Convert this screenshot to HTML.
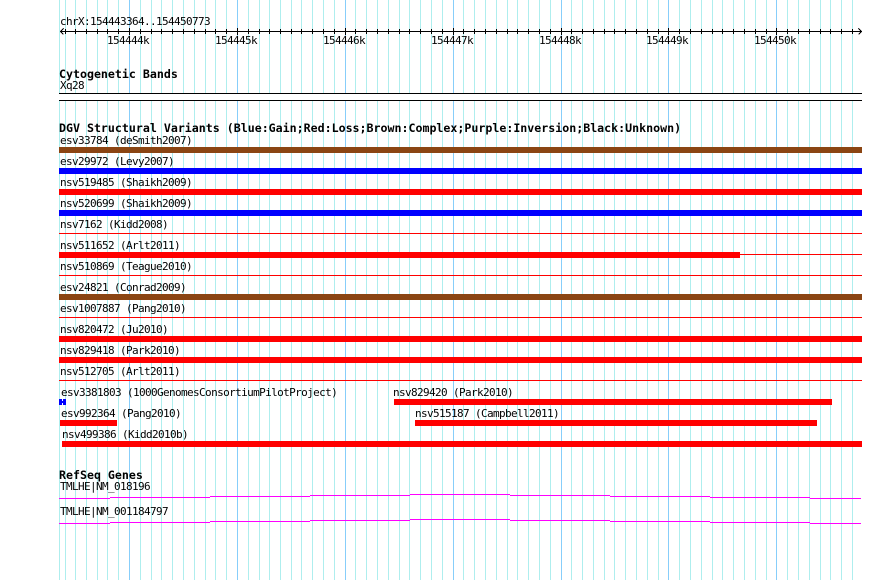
<!DOCTYPE html>
<html><head><meta charset="utf-8"><style>
html,body{margin:0;padding:0;background:#fff}
svg{display:block}
text{font-family:"DejaVu Sans Mono","Liberation Mono",monospace;font-size:11px;letter-spacing:-0.62px;fill:#000}
text.b{font-size:11.62px;letter-spacing:0;font-weight:bold}
</style></head><body>
<svg width="890" height="580" viewBox="0 0 890 580" shape-rendering="crispEdges">
<rect width="890" height="580" fill="#fff"/>
<path fill="none" stroke="#aeeeee" d="M59.5 0V580M65.5 0V580M75.5 0V580M86.5 0V580M97.5 0V580M107.5 0V580M118.5 0V580M140.5 0V580M151.5 0V580M161.5 0V580M172.5 0V580M183.5 0V580M194.5 0V580M205.5 0V580M215.5 0V580M226.5 0V580M248.5 0V580M259.5 0V580M269.5 0V580M280.5 0V580M291.5 0V580M301.5 0V580M312.5 0V580M323.5 0V580M334.5 0V580M355.5 0V580M366.5 0V580M377.5 0V580M388.5 0V580M399.5 0V580M409.5 0V580M420.5 0V580M431.5 0V580M442.5 0V580M463.5 0V580M474.5 0V580M485.5 0V580M496.5 0V580M507.5 0V580M517.5 0V580M528.5 0V580M539.5 0V580M550.5 0V580M571.5 0V580M582.5 0V580M593.5 0V580M604.5 0V580M614.5 0V580M625.5 0V580M636.5 0V580M647.5 0V580M658.5 0V580M679.5 0V580M690.5 0V580M701.5 0V580M712.5 0V580M722.5 0V580M733.5 0V580M744.5 0V580M755.5 0V580M766.5 0V580M787.5 0V580M798.5 0V580M809.5 0V580M820.5 0V580M830.5 0V580M841.5 0V580M852.5 0V580"/>
<path fill="none" stroke="#87cefa" d="M129.5 0V580M237.5 0V580M345.5 0V580M453.5 0V580M561.5 0V580M668.5 0V580M776.5 0V580"/>
<rect x="59" y="94" width="804" height="7" fill="#fff"/>
<path fill="none" stroke="#000" d="M60 31.5H862M63.5 28.5L60.5 31.5L63.5 34.5M858.5 28.5L861.5 31.5L858.5 34.5"/>
<path fill="none" stroke="#000" d="M65.5 29V34M75.5 29V34M86.5 29V34M97.5 29V34M107.5 29V34M118.5 29V34M140.5 29V34M151.5 29V34M161.5 29V34M172.5 29V34M183.5 29V34M194.5 29V34M205.5 29V34M215.5 29V34M226.5 29V34M248.5 29V34M259.5 29V34M269.5 29V34M280.5 29V34M291.5 29V34M301.5 29V34M312.5 29V34M323.5 29V34M334.5 29V34M355.5 29V34M366.5 29V34M377.5 29V34M388.5 29V34M399.5 29V34M409.5 29V34M420.5 29V34M431.5 29V34M442.5 29V34M463.5 29V34M474.5 29V34M485.5 29V34M496.5 29V34M507.5 29V34M517.5 29V34M528.5 29V34M539.5 29V34M550.5 29V34M571.5 29V34M582.5 29V34M593.5 29V34M604.5 29V34M614.5 29V34M625.5 29V34M636.5 29V34M647.5 29V34M658.5 29V34M679.5 29V34M690.5 29V34M701.5 29V34M712.5 29V34M722.5 29V34M733.5 29V34M744.5 29V34M755.5 29V34M766.5 29V34M787.5 29V34M798.5 29V34M809.5 29V34M820.5 29V34M830.5 29V34M841.5 29V34M852.5 29V34M129.5 28V35M237.5 28V35M345.5 28V35M453.5 28V35M561.5 28V35M668.5 28V35M776.5 28V35"/>
<path fill="none" stroke="#000" d="M59 93.5H862M59 100.5H862"/>
<text x="60" y="25">chrX:154443364..154450773</text>
<text x="107" y="44">154444k</text><text x="215" y="44">154445k</text><text x="323" y="44">154446k</text><text x="431" y="44">154447k</text><text x="539" y="44">154448k</text><text x="646" y="44">154449k</text><text x="754" y="44">154450k</text>
<text class="b" x="59" y="78">Cytogenetic Bands</text>
<text x="60" y="89">Xq28</text>
<text class="b" x="59" y="132">DGV Structural Variants (Blue:Gain;Red:Loss;Brown:Complex;Purple:Inversion;Black:Unknown)</text>
<path fill="none" stroke="#f00" d="M59 233.5H862M59 254.5H862M59 275.5H862M59 317.5H862M59 380.5H862"/>
<rect x="59" y="147" width="803" height="6" fill="#8b4513"/>
<rect x="59" y="168" width="803" height="6" fill="#00f"/>
<rect x="59" y="189" width="803" height="6" fill="#f00"/>
<rect x="59" y="210" width="803" height="6" fill="#00f"/>
<rect x="59" y="252" width="681" height="6" fill="#f00"/>
<rect x="59" y="294" width="803" height="6" fill="#8b4513"/>
<rect x="59" y="336" width="803" height="6" fill="#f00"/>
<rect x="59" y="357" width="803" height="6" fill="#f00"/>
<rect x="59" y="399" width="7" height="6" fill="#00f"/>
<rect x="62" y="399" width="1" height="2" fill="#fff"/><rect x="62" y="403" width="1" height="2" fill="#fff"/>
<rect x="60" y="420" width="57" height="6" fill="#f00"/>
<rect x="62" y="441" width="800" height="6" fill="#f00"/>
<rect x="394" y="399" width="438" height="6" fill="#f00"/>
<rect x="415" y="420" width="402" height="6" fill="#f00"/>
<text x="60" y="144">esv33784 (deSmith2007)</text>
<text x="60" y="165">esv29972 (Levy2007)</text>
<text x="60" y="186">nsv519485 (Shaikh2009)</text>
<text x="60" y="207">nsv520699 (Shaikh2009)</text>
<text x="60" y="228">nsv7162 (Kidd2008)</text>
<text x="60" y="249">nsv511652 (Arlt2011)</text>
<text x="60" y="270">nsv510869 (Teague2010)</text>
<text x="60" y="291">esv24821 (Conrad2009)</text>
<text x="60" y="312">esv1007887 (Pang2010)</text>
<text x="60" y="333">nsv820472 (Ju2010)</text>
<text x="60" y="354">nsv829418 (Park2010)</text>
<text x="60" y="375">nsv512705 (Arlt2011)</text>
<text x="61" y="396">esv3381803 (1000GenomesConsortiumPilotProject)</text>
<text x="393" y="396">nsv829420 (Park2010)</text>
<text x="61" y="417">esv992364 (Pang2010)</text>
<text x="415" y="417">nsv515187 (Campbell2011)</text>
<text x="62" y="438">nsv499386 (Kidd2010b)</text>
<text class="b" x="59" y="479">RefSeq Genes</text>
<text x="60" y="490">TMLHE|NM_018196</text>
<text x="60" y="515">TMLHE|NM_001184797</text>
<path fill="none" stroke="#f0f" d="M59 498.5H110M110 497.5H210M210 496.5H310M310 495.5H410M410 494.5H510M510 495.5H610M610 496.5H710M710 497.5H810M810 498.5H861"/>
<path fill="none" stroke="#f0f" d="M59 523.5H110M110 522.5H210M210 521.5H310M310 520.5H410M410 519.5H510M510 520.5H610M610 521.5H710M710 522.5H810M810 523.5H861"/>
</svg>
</body></html>
